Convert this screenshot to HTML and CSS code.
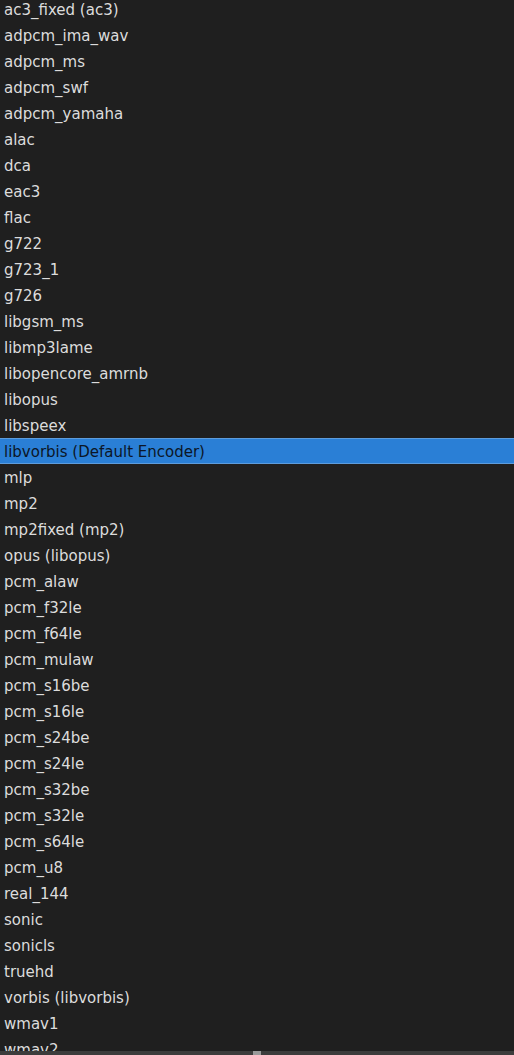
FILE: index.html
```html
<!DOCTYPE html>
<html>
<head>
<meta charset="utf-8">
<link rel="stylesheet" href="styles.css">
</head>
<body>
<div class="view">
  <ul class="list">
    <li>ac3_fixed (ac3)</li>
    <li>adpcm_ima_wav</li>
    <li>adpcm_ms</li>
    <li>adpcm_swf</li>
    <li>adpcm_yamaha</li>
    <li>alac</li>
    <li>dca</li>
    <li>eac3</li>
    <li>flac</li>
    <li>g722</li>
    <li>g723_1</li>
    <li>g726</li>
    <li>libgsm_ms</li>
    <li>libmp3lame</li>
    <li>libopencore_amrnb</li>
    <li>libopus</li>
    <li>libspeex</li>
    <li class="selected">libvorbis (Default Encoder)</li>
    <li>mlp</li>
    <li>mp2</li>
    <li>mp2fixed (mp2)</li>
    <li>opus (libopus)</li>
    <li>pcm_alaw</li>
    <li>pcm_f32le</li>
    <li>pcm_f64le</li>
    <li>pcm_mulaw</li>
    <li>pcm_s16be</li>
    <li>pcm_s16le</li>
    <li>pcm_s24be</li>
    <li>pcm_s24le</li>
    <li>pcm_s32be</li>
    <li>pcm_s32le</li>
    <li>pcm_s64le</li>
    <li>pcm_u8</li>
    <li>real_144</li>
    <li>sonic</li>
    <li>sonicls</li>
    <li>truehd</li>
    <li>vorbis (libvorbis)</li>
    <li>wmav1</li>
    <li>wmav2</li>
  </ul>
  <div class="scrollbar"><div class="handle"></div></div>
</div>
</body>
</html>
```
FILE: styles.css
```css
html, body {
  margin: 0;
  padding: 0;
  background: #1f1f1f;
  overflow: hidden;
}
.view {
  width: 514px;
  height: 1055px;
  display: flex;
  flex-direction: column;
  overflow: hidden;
}
.list {
  list-style: none;
  margin: -4px 0 0 0;
  padding: 0;
  flex: 1;
  overflow: hidden;
  font-family: "DejaVu Sans", sans-serif;
  font-size: 15px;
  color: #dcdcdc;
}
.list li {
  height: 26px;
  line-height: 24px;
  padding: 2px 0 0 4px;
  white-space: nowrap;
  box-sizing: border-box;
}
.list li.selected {
  background: #2a7fd6;
  border-top: 1px solid #5d9cdc;
  border-bottom: 1px solid #5d9cdc;
  padding-top: 1px;
  line-height: 24px;
  color: #0c1626;
}
.scrollbar {
  height: 4px;
  flex: none;
  background: #3c3c3c;
  display: flex;
  justify-content: center;
}
.handle {
  width: 8px;
  height: 4px;
  background: #9a9a9a;
}
```
